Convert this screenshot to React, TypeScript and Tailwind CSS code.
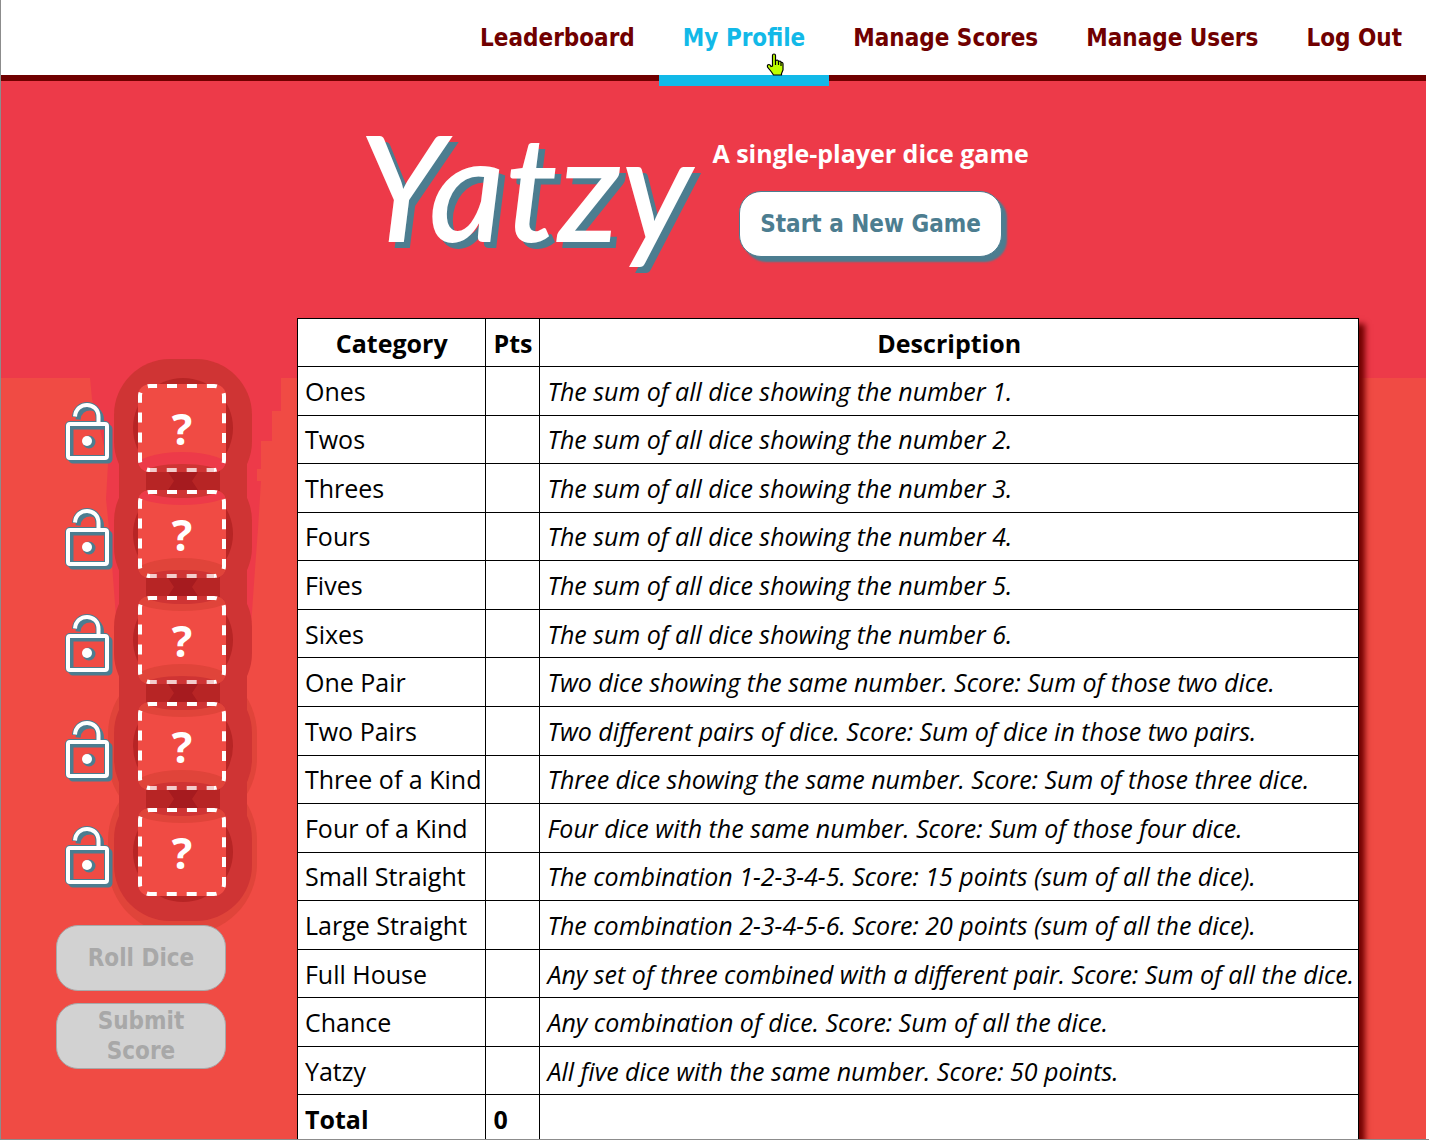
import React from 'react';

const navItems = ['Leaderboard', 'My Profile', 'Manage Scores', 'Manage Users', 'Log Out'];

const categories: [string, string][] = [
  ['Ones', 'The sum of all dice showing the number 1.'],
  ['Twos', 'The sum of all dice showing the number 2.'],
  ['Threes', 'The sum of all dice showing the number 3.'],
  ['Fours', 'The sum of all dice showing the number 4.'],
  ['Fives', 'The sum of all dice showing the number 5.'],
  ['Sixes', 'The sum of all dice showing the number 6.'],
  ['One Pair', 'Two dice showing the same number. Score: Sum of those two dice.'],
  ['Two Pairs', 'Two different pairs of dice. Score: Sum of dice in those two pairs.'],
  ['Three of a Kind', 'Three dice showing the same number. Score: Sum of those three dice.'],
  ['Four of a Kind', 'Four dice with the same number. Score: Sum of those four dice.'],
  ['Small Straight', 'The combination 1-2-3-4-5. Score: 15 points (sum of all the dice).'],
  ['Large Straight', 'The combination 2-3-4-5-6. Score: 20 points (sum of all the dice).'],
  ['Full House', 'Any set of three combined with a different pair. Score: Sum of all the dice.'],
  ['Chance', 'Any combination of dice. Score: Sum of all the dice.'],
  ['Yatzy', 'All five dice with the same number. Score: 50 points.'],
];

function HandCursor() {
  return (
    <svg className="absolute left-[107px] top-[53px] z-10" width="20" height="24" viewBox="0 0 20 24" aria-hidden="true">
      <path
        d="M6.5 13V2.5Q6.5 1 8 1T9.500 2.5V7.500Q12.500 6.500 12.500 8.500Q15 7.500 15 9.500Q17 9 17 11V17L15.500 20.500V22H7.500L5.500 19L1.500 14Q1 11.500 3 11.500Q4 11.500 5 13.500Z"
        fill="#bfff00"
        stroke="#000"
        strokeWidth="1.2"
      />
      <path d="M9.500 7V12M12.500 8.500V12M15 10V13" stroke="#000" strokeWidth="1.2" />
    </svg>
  );
}

function LockIcon() {
  return (
    <svg width="50" height="64" viewBox="0 0 50 64" aria-hidden="true">
      <g fill="none" stroke="#4c7d90">
        <g strokeWidth="5" transform="translate(3 3)">
          <rect x="4" y="24" width="39" height="34" rx="2" />
          <path d="M11 16.500C12 1 34.500 1 34.500 17V23" />
        </g>
        <g strokeWidth="6">
          <rect x="4" y="24" width="39" height="34" rx="2" />
          <path d="M11 17C12 1 34.500 1 34.500 17V23" />
        </g>
        <circle cx="25" cy="42" r="4" strokeWidth="5" />
      </g>
      <g fill="none" stroke="#fff" strokeWidth="4">
        <rect x="4" y="24" width="39" height="34" rx="2" />
        <path d="M11 16.500C12 1 34.500 1 34.500 17V23" />
      </g>
      <circle cx="23" cy="41" r="5" fill="#fff" />
    </svg>
  );
}

const dieTops = [45, 151, 257, 363, 469];

function DiceGlow() {
  return (
    <svg className="pointer-events-none absolute -left-[49px] -top-[45px]" width="192" height="600" viewBox="0 0 192 600" aria-hidden="true">
      <path
        d="M0 39H191V72H182V102H171V130H167V142H171L168 190L165 230L158 330H30L20 200L16 160L18 125L10 90L2 60Z"
        fill="#ed3a49"
      />
      {dieTops.slice(3).map((y) => (
        <rect key={y} x="18" y={y - 38} width="149" height="164" rx="70" fill="#e0443a" />
      ))}
      {dieTops.map((y) => (
        <rect key={y} x="24" y={y - 25} width="138" height="138" rx="56" fill="#cf3434" />
      ))}
      <rect x="29" y="90" width="128" height="420" fill="#cf3434" />
      {dieTops.map((y) => (
        <ellipse key={y} cx="93" cy={y + 44} rx="50" ry="50" fill="#b72525" />
      ))}
      {dieTops.slice(1).map((y) => (
        <g key={y}>
          <rect x="56" y={y - 30} width="74" height="40" fill="#b72525" />
          <path d={`M78 ${y - 18}H108L102 ${y - 9}L108 ${y}H78L84 ${y - 9}Z`} fill="#a61b1f" />
        </g>
      ))}
    </svg>
  );
}

function Die({ index }: { index: number }) {
  return (
    <div className="relative grid size-22 place-items-center text-[43px] leading-none font-bold text-white">
      <svg className="absolute inset-0" width="88" height="88" viewBox="0 0 88 88" aria-hidden="true">
        <clipPath id={`die-${index}`}>
          <rect width="88" height="88" rx="12" />
        </clipPath>
        <rect width="88" height="88" rx="12" fill="#f04b44" />
        <g clipPath={`url(#die-${index})`}>
          {index > 0 && (
            <>
              <ellipse cx="44" cy="2" rx="48" ry="13" fill={index === 1 ? '#ed3a49' : '#e0443a'} />
              <ellipse cx="44" cy="0" rx="35" ry="8" fill="#cf3434" />
            </>
          )}
          {index < 4 && (
            <>
              <ellipse cx="44" cy="84" rx="48" ry="16" fill={index === 0 ? '#ed3a49' : '#e0443a'} />
              <ellipse cx="44" cy="88" rx="36" ry="8" fill="#cf3434" />
            </>
          )}
        </g>
        <rect
          x="2"
          y="2"
          width="84"
          height="84"
          rx="10"
          fill="none"
          stroke="#fff"
          strokeWidth="4"
          strokeDasharray="10 9.942"
          strokeDashoffset="-17"
        />
        {index < 4 && <path d="M12 86H76" stroke="#cf3434" strokeOpacity="0.25" strokeWidth="4" />}
      </svg>
      <span className="relative">?</span>
    </div>
  );
}

const buttonText =
  "rounded-[22px] border font-['DejaVu_Sans_Condensed','DejaVu_Sans',sans-serif] text-2xl leading-[30px] font-bold";

export default function App() {
  return (
    <div className="h-screen overflow-hidden border-b border-l border-[#8c8c8c] bg-white pr-[3px] font-['Open_Sans',sans-serif]">
      <div className="min-h-full bg-[linear-gradient(#ed3a49_378px,#f04b44_378px)]">
        <header className="border-b-[6px] border-[#700000] bg-white">
          <nav className="flex h-[75px] justify-end font-['DejaVu_Sans_Condensed','DejaVu_Sans',sans-serif] text-2xl font-bold text-[#700000]">
            {navItems.map((item) =>
              item === 'My Profile' ? (
                <a key={item} href="#" className="relative flex items-center px-6 text-[#12b9e8]">
                  {item}
                  <span className="absolute inset-x-0 top-full h-[11px] bg-[#12b9e8]" />
                  <HandCursor />
                </a>
              ) : (
                <a key={item} href="#" className="flex items-center px-6">
                  {item}
                </a>
              ),
            )}
          </nav>
        </header>

        <section className="flex h-[237px] justify-center gap-5 pr-10 text-white">
          <h1 className="pt-5 font-['Lato',sans-serif] text-[148px] leading-[168px] font-medium italic [text-shadow:6px_6px_0_#4c7d90]">
            Yatzy
          </h1>
          <div className="flex flex-col items-center pt-[54px]">
            <p className="text-[25px] leading-9 font-bold">A single-player dice game</p>
            <button className={`${buttonText} mt-5 h-[66px] border-[#4c7d90] bg-white px-5 text-[#4c7d90] shadow-[5px_5px_2px_#4c7d90]`}>
              Start a New Game
            </button>
          </div>
        </section>

        <main className="flex items-start justify-center gap-[71px] pr-3">
          <aside className="relative w-[170px] shrink-0 pt-[66px]">
            <div className="relative">
              <div className="absolute left-[83px] top-0">
                <DiceGlow />
              </div>
              <div className="flex flex-col gap-[18px]">
                {[0, 1, 2, 3, 4].map((i) => (
                  <div key={i} className="relative flex items-center justify-between">
                    <button aria-label={`Lock die ${i + 1}`} className="ml-2 pt-2">
                      <LockIcon />
                    </button>
                    <Die index={i} />
                  </div>
                ))}
              </div>
            </div>
            <div className="relative mt-7 flex flex-col gap-3 pt-px">
              <button disabled className={`${buttonText} h-[66px] border-[#a8a8a8] bg-[#d2d2d2] text-[#a8a8a8]`}>
                Roll Dice
              </button>
              <button disabled className={`${buttonText} h-[66px] border-[#a8a8a8] bg-[#d2d2d2] px-6 text-[#a8a8a8]`}>
                Submit Score
              </button>
            </div>
          </aside>

          <table className="relative h-[826px] border-collapse bg-white text-[25px] leading-[34px] text-black shadow-[6px_6px_6px_#700000] [&_td]:border [&_td]:border-black [&_td]:pr-1 [&_td]:pl-[7px] [&_th]:h-12 [&_th]:border [&_th]:border-black [&_th]:px-[7px]">
            <thead>
              <tr>
                <th>Category</th>
                <th>Pts</th>
                <th>Description</th>
              </tr>
            </thead>
            <tbody>
              {categories.map(([name, description]) => (
                <tr key={name}>
                  <td className="whitespace-nowrap">{name}</td>
                  <td />
                  <td className="whitespace-nowrap italic">{description}</td>
                </tr>
              ))}
              <tr className="font-bold">
                <td>Total</td>
                <td>0</td>
                <td />
              </tr>
            </tbody>
          </table>
        </main>
      </div>
    </div>
  );
}
